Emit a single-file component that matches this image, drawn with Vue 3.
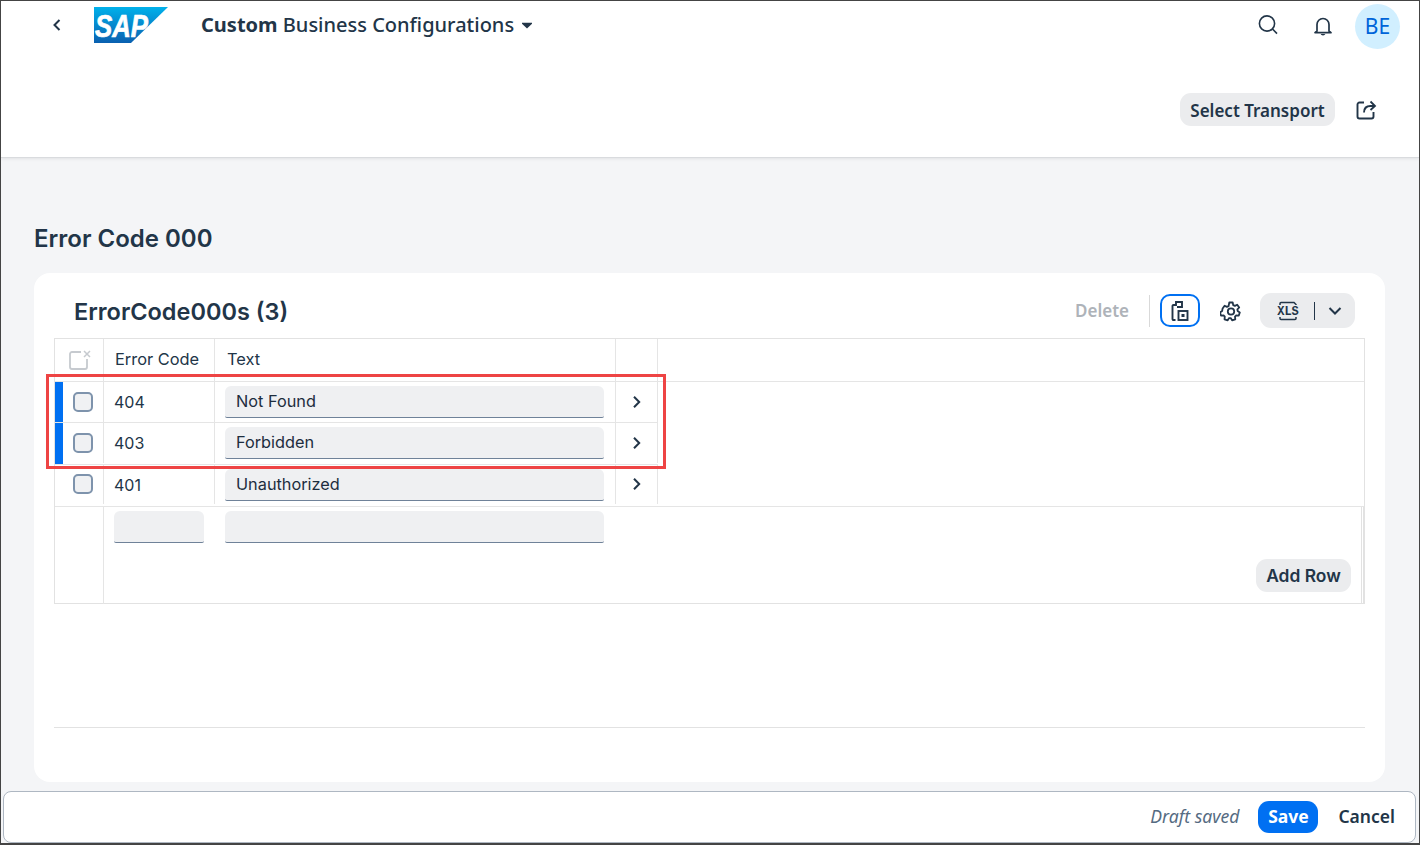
<template>
  <div class="page">
    <header class="header">
      <div class="shellbar">
        <svg class="back" width="12" height="14" viewBox="0 0 12 14"><path d="M8.5 2 L3.5 7 L8.5 12" fill="none" stroke="#223548" stroke-width="2"/></svg>
        <svg class="logo" width="74" height="36" viewBox="0 0 74 36">
          <defs>
            <linearGradient id="sapg" x1="0" y1="0" x2="0" y2="1">
              <stop offset="0" stop-color="#00b1eb"/>
              <stop offset="1" stop-color="#0a60b0"/>
            </linearGradient>
          </defs>
          <path d="M0 0H74L37 36H0Z" fill="url(#sapg)"/>
          <text x="1" y="30" class="logo-text" textLength="53" lengthAdjust="spacingAndGlyphs">SAP</text>
        </svg>
        <div class="app-title"><b>Custom</b> Business Configurations</div>
        <svg class="caret" width="10" height="7" viewBox="0 0 10 7"><path d="M0 0.8H10V1.8L5 6.5L0 1.8Z" fill="#223548"/></svg>
        <div class="shell-right">
          <svg class="search" width="22" height="22" viewBox="0 0 22 22"><circle cx="10" cy="9.5" r="7.6" fill="none" stroke="#223548" stroke-width="1.6"/><path d="M15.5 15 L20 19.6" stroke="#223548" stroke-width="1.6"/></svg>
          <svg class="bell" width="22" height="22" viewBox="0 0 22 22"><path d="M5 16V9.5a6 6 0 0 1 12 0V16l2 1.6H3Z" fill="none" stroke="#223548" stroke-width="1.7" stroke-linejoin="round"/><path d="M8.6 19a2.5 2 0 0 0 4.8 0Z" fill="#223548"/></svg>
          <div class="avatar">BE</div>
        </div>
      </div>
      <div class="header-actions">
        <button class="btn grey transport">Select Transport</button>
        <svg width="22" height="22" viewBox="0 0 22 22"><path d="M9 3.5H4.5a2 2 0 0 0-2 2v12a2 2 0 0 0 2 2h12a2 2 0 0 0 2-2V13" fill="none" stroke="#223548" stroke-width="1.9"/><path d="M9 13.5c0-4 2.500-6.500 6.500-6.500H19" fill="none" stroke="#223548" stroke-width="1.800"/><path d="M15.500 2.500 L20 7 L15.500 11" fill="none" stroke="#223548" stroke-width="1.800"/></svg>
      </div>
    </header>

    <main class="main">
      <h1 class="section-title">Error Code 000</h1>
      <section class="card">
        <div class="toolbar">
          <h2 class="table-title">ErrorCode000s (3)</h2>
          <span class="delete">Delete</span>
          <span class="sep"></span>
          <button class="icon-btn focused">
            <svg width="18" height="22" viewBox="0 0 18 22"><path d="M4.500 20H2.500a1 1 0 0 1-1-1V6a1 1 0 0 1 1-1H5V2h6v5H6" fill="none" stroke="#223548" stroke-width="1.900"/><rect x="7.500" y="11" width="9" height="9" fill="none" stroke="#223548" stroke-width="1.900"/><rect x="10.500" y="14" width="3" height="3" fill="#223548"/></svg>
          </button>
          <svg class="gear" width="22" height="22" viewBox="0 0 22 22"><path d="M9.300 2.500h3.400l.5 2.600 1.700.8 2.300-1.200 2 2.800-1.800 1.900.2 1.600 2.200 1.400-1 3.200-2.600-.2-1.200 1.300.3 2.600-3.200 1-1.400-2.200h-1.600l-1.400 2.200-3.200-1 .3-2.600-1.200-1.300-2.600.2-1-3.200 2.200-1.400.2-1.600L2.600 8.500l2-2.800 2.300 1.200 1.700-.8Z" fill="none" stroke="#223548" stroke-width="1.800" stroke-linejoin="round"/><circle cx="11" cy="11.500" r="3.200" fill="none" stroke="#223548" stroke-width="1.800"/></svg>
          <div class="export">
            <svg width="22" height="20" viewBox="0 0 22 20">
              <path d="M3 4V2.500a1 1 0 0 1 1-1h13l2 2V4M3 16V17.500a1 1 0 0 0 1 1H18a1 1 0 0 0 1-1V16" fill="none" stroke="#223548" stroke-width="1.500"/>
              <text x="11" y="14" text-anchor="middle" class="xls-text">XLS</text>
            </svg>
            <span class="export-sep"></span>
            <svg width="14" height="10" viewBox="0 0 14 10"><path d="M1.500 2 L7 7.500 L12.500 2" fill="none" stroke="#223548" stroke-width="2"/></svg>
          </div>
        </div>

        <div class="table">
          <div class="row head">
            <div class="cell c-sel">
              <svg width="22" height="20" viewBox="0 0 22 20"><path d="M12 2H3a2 2 0 0 0-2 2v13a2 2 0 0 0 2 2h13a2 2 0 0 0 2-2V9" fill="none" stroke="#c6cacf" stroke-width="1.800"/><path d="M15 1 L21 7 M21 1 L15 7" stroke="#c6cacf" stroke-width="1.500"/></svg>
            </div>
            <div class="cell c-code head-code">Error Code</div>
            <div class="cell c-text head-text">Text</div>
            <div class="cell c-nav"></div>
          </div>
          <div v-for="r in rows" :key="r.code" class="row" :class="r.changed ? 'changed' : 'last'">
            <span v-if="r.changed" class="marker"></span>
            <div class="cell c-sel"><span class="check"></span></div>
            <div class="cell c-code code">{{ r.code }}</div>
            <div class="cell c-text"><div class="input">{{ r.text }}</div></div>
            <div class="cell c-nav">
              <svg width="10" height="14" viewBox="0 0 10 14"><path d="M2 1.800 L7.200 7 L2 12.200" fill="none" stroke="#223548" stroke-width="2"/></svg>
            </div>
          </div>
          <div class="add-row">
            <div class="cell c-sel"></div>
            <div class="add-body">
              <div class="add-inputs">
                <div class="input empty small"></div>
                <div class="input empty wide"></div>
              </div>
              <button class="btn grey add">Add Row</button>
            </div>
          </div>
          <div class="highlight"></div>
        </div>
        <div class="card-rule"></div>
      </section>
    </main>

    <footer class="footer">
      <span class="draft">Draft saved</span>
      <button class="btn save">Save</button>
      <button class="btn cancel">Cancel</button>
    </footer>
  </div>
</template>

<script setup>
const rows = [
  { code: '404', text: 'Not Found', changed: true },
  { code: '403', text: 'Forbidden', changed: true },
  { code: '401', text: 'Unauthorized', changed: false },
]
</script>

<style>
html, body {
  margin: 0;
  background: #f4f5f7;
}
</style>

<style scoped>
.page {
  position: relative;
  width: 1420px;
  height: 845px;
  box-sizing: border-box;
  border: 1px solid #444;
  border-bottom-width: 2px;
  background: #f4f5f7;
  font-family: "Inter", "Noto Sans", sans-serif;
  color: #223548;
  display: flex;
  flex-direction: column;
  overflow: hidden;
}
.header {
  height: 157px;
  flex: none;
  background: #fff;
  border-bottom: 1px solid #d9dbde;
  box-shadow: 0 1px 3px rgba(0, 0, 0, 0.08);
  box-sizing: border-box;
}
.shellbar {
  height: 50px;
  display: flex;
  align-items: center;
  padding: 0 19px 0 50px;
}
.back { margin-top: -3px; }
.logo { margin-left: 31px; margin-top: -2px; }
.logo-text {
  font-family: "Liberation Sans", sans-serif;
  font-weight: 700;
  font-style: italic;
  font-size: 31px;
  fill: #fff;
  stroke: #fff;
  stroke-width: 0.7px;
}
.app-title {
  margin-left: 33px;
  margin-top: -4px;
  font-family: "Noto Sans", sans-serif;
  font-size: 20px;
  font-weight: 500;
  white-space: nowrap;
}
.app-title b { font-weight: 700; }
.caret { margin-left: 8px; margin-top: -2px; }
.shell-right {
  margin-left: auto;
  display: flex;
  align-items: center;
}
.search { margin-right: 33px; margin-top: -2px; }
.bell { margin-right: 21px; }
.avatar {
  width: 45px;
  height: 45px;
  border-radius: 50%;
  background: #d1efff;
  color: #0064d9;
  font-family: "Noto Sans", sans-serif;
  font-size: 21px;
  display: flex;
  align-items: center;
  justify-content: center;
}
.header-actions {
  display: flex;
  justify-content: flex-end;
  align-items: center;
  gap: 20px;
  padding: 42px 42px 0 0;
}
.btn {
  border: 0;
  font-family: "Noto Sans", sans-serif;
  font-weight: 600;
  color: #223548;
  border-radius: 11px;
}
.grey { background: #ebecee; }
.transport {
  width: 155px;
  height: 33px;
  font-size: 17px;
  padding: 1px 0 0;
}
.main {
  flex: 1;
  display: flex;
  flex-direction: column;
  padding: 0 34px 0 33px;
  min-height: 0;
}
.section-title {
  margin: 65px 0 18px;
  font-family: "Inter", sans-serif;
  font-size: 24px;
  font-weight: 600;
  line-height: 32px;
}
.card {
  height: 509px;
  flex: none;
  background: #fff;
  border-radius: 16px;
  padding: 0 20px;
  box-sizing: border-box;
}
.toolbar {
  height: 65px;
  display: flex;
  align-items: center;
  padding: 10px 10px 0 20px;
  box-sizing: border-box;
}
.table-title {
  margin: 2px auto 0 0;
  font-family: "Inter", sans-serif;
  font-size: 23.5px;
  font-weight: 600;
}
.delete {
  font-family: "Noto Sans", sans-serif;
  font-size: 17px;
  font-weight: 600;
  color: #aeb3b9;
}
.sep {
  width: 1px;
  height: 32px;
  background: #d9d9d9;
  margin: 0 10px 0 20px;
}
.icon-btn {
  width: 40px;
  height: 33px;
  padding: 0;
  background: #fff;
  border: 2px solid #0070f2;
  border-radius: 10px;
  display: flex;
  align-items: center;
  justify-content: center;
}
.gear { margin-left: 20px; }
.export {
  width: 95px;
  height: 35px;
  margin-left: 18px;
  border-radius: 11px;
  background: #ebecee;
  display: flex;
  align-items: center;
  padding-left: 17px;
  box-sizing: border-box;
}
.xls-text {
  font-family: "Liberation Mono", monospace;
  font-size: 12px;
  font-weight: 700;
  fill: #223548;
}
.export-sep {
  width: 1px;
  height: 18px;
  background: #223548;
  margin: 0 13px 0 15px;
}
.table {
  position: relative;
  width: 1311px;
  border: 1px solid #e2e2e2;
  box-sizing: border-box;
  height: 266px;
}
.row {
  position: relative;
  display: flex;
  height: 41px;
  border-bottom: 1px solid #e5e5e5;
  box-sizing: border-box;
}
.row.head { height: 43px; }
.row.changed { width: 603px; }
.row.changed + .row.changed { height: 42px; padding-bottom: 1px; }
.row.last { height: 42px; padding-bottom: 2px; }
.row.last .check, .row.last .c-nav svg { margin-bottom: 2px; }
.cell {
  box-sizing: border-box;
  display: flex;
  align-items: center;
  flex: none;
}
.c-sel {
  width: 49px;
  border-right: 1px solid #e5e5e5;
  justify-content: center;
  padding-left: 8px;
}
.head .c-sel { padding-left: 1px; padding-right: 0; }
.c-code {
  width: 111px;
  border-right: 1px solid #e5e5e5;
  padding-left: 10px;
}
.c-text {
  width: 401px;
  border-right: 1px solid #e5e5e5;
  padding-left: 10px;
}
.c-nav {
  width: 42px;
  border-right: 1px solid #e5e5e5;
  justify-content: center;
}
.head-code, .head-text {
  font-size: 16.4px;
  padding-bottom: 2px;
}
.head-code { padding-left: 11px; }
.head-text { padding-left: 12px; }
.code { font-size: 16px; }
.marker {
  position: absolute;
  left: 0;
  top: 0;
  bottom: 0;
  width: 8px;
  background: #0070f2;
}
.check {
  width: 20px;
  height: 20px;
  box-sizing: border-box;
  border: 2px solid #7e93ac;
  border-radius: 5px;
  background: #f0f1f3;
}
.input {
  width: 379px;
  height: 32px;
  background: #eff0f2;
  border-bottom: 1px solid #6f8299;
  border-radius: 6px 6px 2px 2px;
  box-sizing: border-box;
  padding-left: 11px;
  font-size: 16.3px;
  color: #1d2d3e;
  line-height: 30px;
}
.add-row {
  display: flex;
  height: 97px;
}
.add-row .c-sel { height: 100%; }
.add-body {
  flex: 1;
  display: flex;
  flex-direction: column;
  border-right: 3px double #e2e2e2;
  padding: 4px 10px 0 10px;
}
.add-inputs {
  display: flex;
  gap: 21px;
}
.input.small { width: 90px; }
.input.wide { width: 379px; }
.add {
  align-self: flex-end;
  width: 95px;
  height: 33px;
  margin-top: 16px;
  font-family: "Inter", sans-serif;
  font-size: 17.4px;
  padding: 0;
}
.highlight {
  position: absolute;
  left: -9px;
  top: 35px;
  width: 620px;
  height: 95px;
  box-sizing: border-box;
  border: 3px solid #ee4444;
}
.card-rule {
  height: 1px;
  width: 1311px;
  margin-top: 123px;
  background: #e2e2e2;
}
.footer {
  position: absolute;
  left: 2px;
  top: 790px;
  width: 1413px;
  height: 52px;
  box-sizing: border-box;
  background: #fff;
  border: 1px solid #aeb7c2;
  border-radius: 8px;
  display: flex;
  align-items: center;
  justify-content: flex-end;
  padding: 0 20px 1px 0;
}
.draft {
  font-family: "Noto Sans", sans-serif;
  font-style: italic;
  font-size: 17.6px;
  color: #556b82;
  margin-right: 19px;
  margin-top: -2px;
}
.save {
  width: 60px;
  height: 32px;
  background: #0070f2;
  color: #fff;
  font-size: 17.5px;
  font-weight: 700;
  padding: 0 0 2px;
}
.cancel {
  background: none;
  font-size: 17.5px;
  font-weight: 600;
  margin-left: 20px;
  padding: 0 0 2px;
}
</style>
